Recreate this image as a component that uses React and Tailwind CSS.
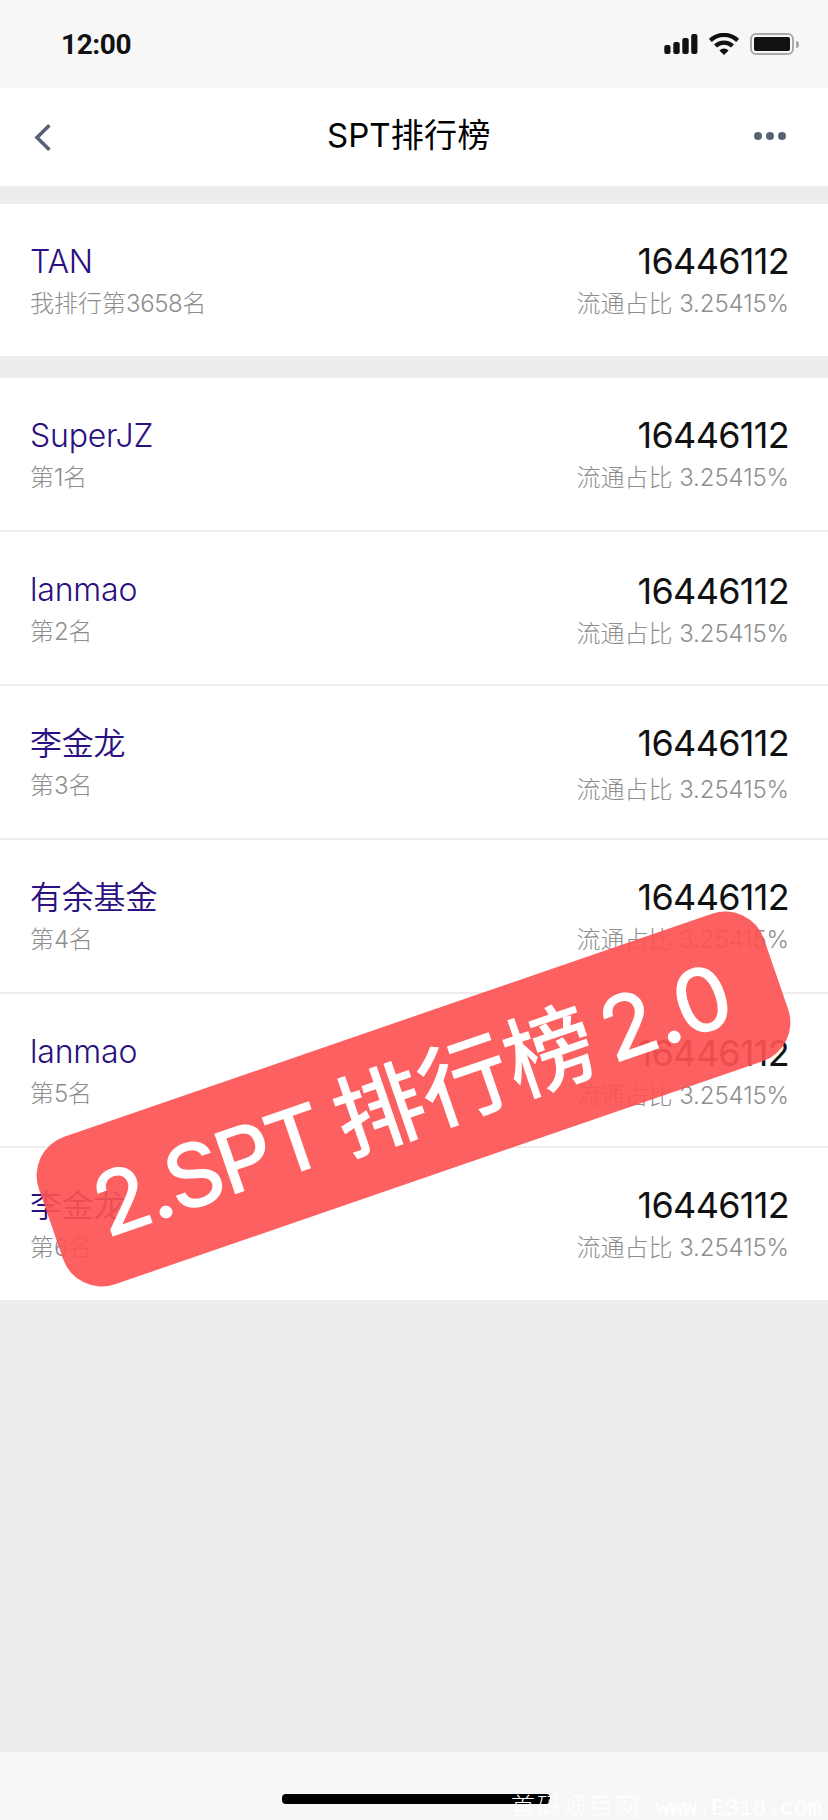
import React from "react";

const me = { name: "TAN", rank: ["我排行第", "3658", "名"] };

// numTop / rateTop are the small vertical shifts of the right column
const rows = [
  { name: "SuperJZ", rank: "1", numTop: "pt-[33px]", rateTop: "mt-px" },
  { name: "lanmao", rank: "2", numTop: "pt-[35px]", rateTop: "mt-px" },
  { name: "李金龙", rank: "3", numTop: "pt-[33px]", rateTop: "mt-[5px]" },
  { name: "有余基金", rank: "4", numTop: "pt-[33px]", rateTop: "mt-px" },
  { name: "lanmao", rank: "5", numTop: "pt-[35px]", rateTop: "mt-px" },
  { name: "李金龙", rank: "6", numTop: "pt-[33px]", rateTop: "mt-px" },
];

const StatusBar = () => (
  <div className="h-[88px] bg-[#f7f7f7] flex items-center justify-between pl-[61px] pr-[29px]">
    <span className="pt-px font-['Roboto',sans-serif] font-bold text-[28px] leading-8 tracking-[-0.4px] text-[#111]">
      12:00
    </span>
    <div className="flex items-center">
      <svg width="34" height="22" viewBox="0 0 34 22" fill="#111">
        <rect x="0.3" y="12" width="6.2" height="9" rx="2" />
        <rect x="9.3" y="9" width="6.4" height="12" rx="2" />
        <rect x="18.3" y="5" width="6.4" height="16" rx="2" />
        <rect x="27.2" y="1" width="6.2" height="20" rx="2" />
      </svg>
      <svg className="ml-[11px]" width="30" height="22" viewBox="0 0 30 22" fill="none" stroke="#111">
        <path d="M1.4 7.4a19.6 19.6 0 0 1 27.2 0" strokeWidth="4.2" />
        <path d="M6.5 13a12.4 12.4 0 0 1 17 0" strokeWidth="4.2" />
        <path d="M15 22l-4.6-4.6a6.8 6.8 0 0 1 9.2 0z" fill="#111" stroke="none" />
      </svg>
      <div className="ml-[11px] w-11 h-[22px] rounded-[6px] border-2 border-[#a9a9a9] p-[2px]">
        <div className="h-full rounded-[2px] bg-[#111]"></div>
      </div>
      <div className="ml-[2px] w-[3px] h-[7px] rounded-r-full bg-[#a9a9a9]"></div>
    </div>
  </div>
);

const Header = () => (
  <div className="h-[98px] bg-white flex items-center justify-between pl-[34px] pr-[42px]">
    <svg width="18" height="28" viewBox="0 0 18 28" fill="none" stroke="#596275" strokeWidth="3.6">
      <path d="M15.4 2.2L3 14.6l12.4 12.2" />
    </svg>
    <h1 className="pl-3 pb-[5px] text-[33px] leading-[48px] text-black">
      SPT<span className="tracking-[0.4px]">排行榜</span>
    </h1>
    <svg className="mb-[2px]" width="32" height="8" viewBox="0 0 32 8" fill="#596275">
      <circle cx="4" cy="4" r="4" />
      <circle cx="16" cy="4" r="4" />
      <circle cx="28" cy="4" r="4" />
    </svg>
  </div>
);

const RankRow = ({ name, rank, numTop = "pt-[33px]", rateTop = "mt-px" }) => (
  <div className="h-[152px] bg-white flex justify-between pl-[30px] pr-[39px]">
    <div className="pt-[34px]">
      <div className="text-[32px] leading-[48px] font-[350] tracking-[-0.2px] text-[#2a1080]">{name}</div>
      <div className="text-2xl leading-9 font-light text-[#8e8e8e]">
        {rank[0]}
        <span className="tracking-[-0.4px]">{rank[1]}</span>
        {rank[2]}
      </div>
    </div>
    <div className={`text-right ${numTop}`}>
      <div className="text-4xl leading-[48px] text-[#111] font-normal tracking-[-0.7px]">16446112</div>
      <div className={`text-2xl leading-9 font-light text-[#8e8e8e] ${rateTop}`}>
        流通占比 <span className="tracking-[-0.1px]">3.25415%</span>
      </div>
    </div>
  </div>
);

const App = () => {
  return (
    <div className="relative w-[828px] h-[1820px] overflow-hidden flex flex-col bg-[#ededed] font-['Inter','Noto_Sans_CJK_SC',sans-serif]">
      <StatusBar />
      <Header />

      {/* My rank */}
      <div className="mt-[18px]">
        <RankRow name={me.name} rank={me.rank} />
      </div>

      {/* Rank list */}
      <div className="mt-[22px] flex flex-col gap-[2px]">
        {rows.map((row) => (
          <RankRow key={row.rank} {...row} rank={["第", row.rank, "名"]} />
        ))}
      </div>

      {/* Home indicator */}
      <div className="mt-auto h-[68px] bg-[#f7f7f7] pt-[42px]">
        <div className="ml-[282px] w-[268px] h-[10px] rounded-[4px] bg-black"></div>
      </div>

      {/* Version stamp */}
      <div className="absolute left-[30px] top-[1021px] w-[767px] h-[156px] rounded-[41px] bg-[#fc5252]/92 -rotate-[19deg] flex items-center pl-[48px] text-white font-medium text-[88px] leading-[156px] whitespace-nowrap">
        <span className="tracking-[-3px]">2.SPT</span>
        <span className="ml-[18px] text-[90px]">排行榜</span>
        <span className="ml-[11px] tracking-[-1px]">2.0</span>
      </div>

      {/* Watermark */}
      <div className="absolute left-[511px] top-[1789px] flex items-baseline whitespace-nowrap text-white leading-[30px]">
        <span className="font-['Noto_Sans_CJK_SC',sans-serif] font-light text-2xl tracking-[2px]">首码项目网</span>
        <span className="ml-[15px] font-['Liberation_Mono',monospace] text-[23px]">www.E318.com</span>
      </div>
    </div>
  );
};

export default App;
